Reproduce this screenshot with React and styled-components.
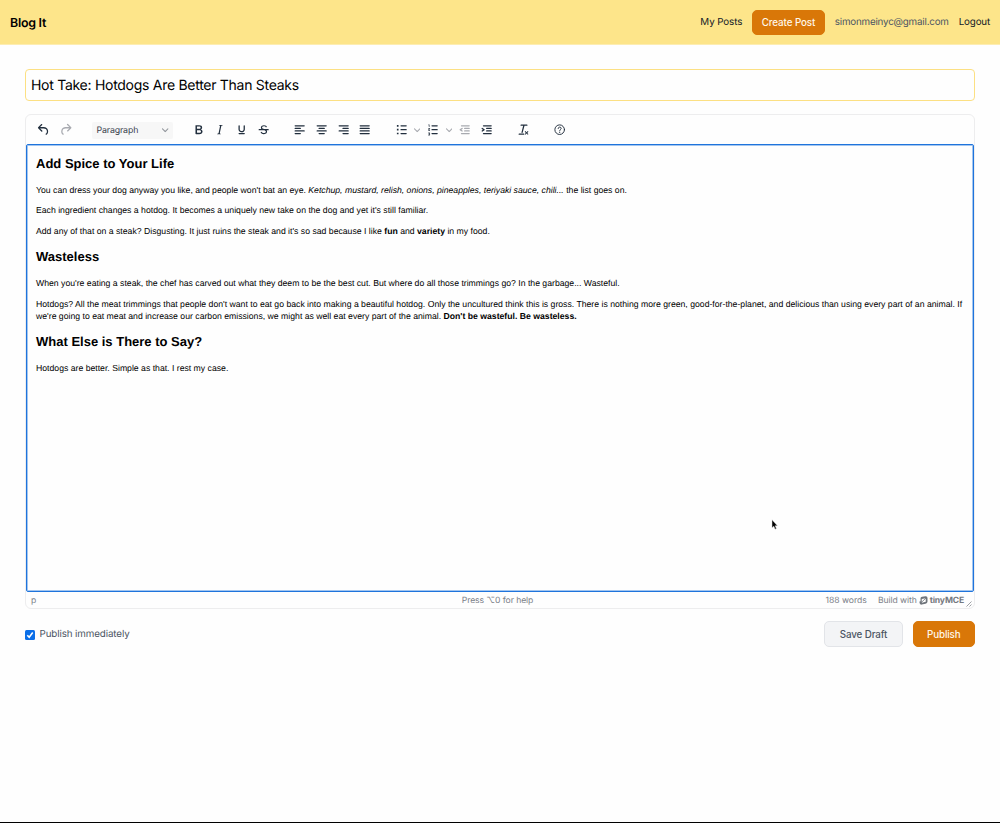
import React from 'react';
import styled, { createGlobalStyle } from 'styled-components';

const Global = createGlobalStyle`
  *, *::before, *::after { box-sizing: border-box; }
  html, body { margin: 0; padding: 0; background: #fff; }
  body {
    font-family: Inter, "Liberation Sans", sans-serif;
    color: #000;
    overflow: hidden;
    text-rendering: geometricPrecision;
  }
`;

const Page = styled.div`
  display: flex;
  flex-direction: column;
  height: 823px;
  border-bottom: 1px solid #000;
  background: #fefefe;
`;

const Header = styled.header`
  display: flex;
  align-items: center;
  justify-content: space-between;
  height: 45px;
  padding: 1px 10px 0;
  background: #fde58a;
  border-bottom: 1px solid #fdedb2;
`;

const Brand = styled.span`
  padding-bottom: 1px;
  font-size: 12.4px;
  font-weight: 600;
  letter-spacing: -0.25px;
  white-space: nowrap;
`;

const Nav = styled.nav`
  display: flex;
  align-items: center;
  gap: 10px;
`;

const NavLink = styled.span`
  padding-top: 1px;
  font-size: 9.8px;
  line-height: 16px;
  white-space: nowrap;
  letter-spacing: ${(p) => p.$ls || '0'};
  color: ${(p) => (p.$muted ? '#4b5563' : '#111827')};
`;

const Button = styled.button`
  display: flex;
  align-items: center;
  justify-content: center;
  flex: none;
  width: ${(p) => p.$w}px;
  height: ${(p) => p.$h || 26}px;
  padding: 0;
  border: 1px solid ${(p) => (p.$plain ? '#e2e4e8' : '#d97708')};
  border-radius: 5px;
  background: ${(p) => (p.$plain ? '#f3f4f6' : '#d97708')};
  color: ${(p) => (p.$plain ? '#4b5563' : '#fff8ea')};
  font-family: inherit;
  font-size: 9.8px;
  font-weight: 500;
  letter-spacing: ${(p) => p.$ls || '0'};
  white-space: nowrap;
`;

const Main = styled.main`
  display: flex;
  flex-direction: column;
  padding: 24px 25px 0;
`;

const TitleField = styled.div`
  display: flex;
  align-items: center;
  height: 32px;
  padding: 1px 5px 0;
  border: 1px solid #fce083;
  border-radius: 4px;
  font-size: 14px;
  letter-spacing: -0.28px;
  white-space: nowrap;
`;

const Editor = styled.section`
  display: flex;
  flex-direction: column;
  height: 495px;
  margin-top: 13px;
  border: 1px solid #ededee;
  border-radius: 6px;
`;

const Toolbar = styled.div`
  display: flex;
  align-items: center;
  height: 29px;
  padding: 1px 0 0 7px;
`;

const Group = styled.div`
  display: flex;
  align-items: center;
  margin-left: ${(p) => p.$gap || 0}px;
`;

const Tool = styled.span`
  display: flex;
  align-items: center;
  justify-content: center;
  width: ${(p) => p.$w || 21.76}px;
  height: 22px;
  color: ${(p) => (p.$off ? '#a8aab0' : '#222f3e')};
  svg { display: block; fill: currentColor; }
`;

const BlockSelect = styled.div`
  display: flex;
  align-items: center;
  justify-content: space-between;
  width: 81px;
  height: 17px;
  margin-left: 15px;
  padding: 1px 4px 0 5px;
  border-radius: 2px;
  background: #f7f7f7;
  color: #39424e;
  font-size: 8.8px;
  letter-spacing: -0.15px;
  svg { fill: #92969c; }
`;

const Content = styled.article`
  flex: 1;
  padding: 11px 9px 0 9px;
  border: 1px solid #1f74dc;
  border-radius: 2px;
  box-shadow: inset 0 0 0 1px #a3c6f0;
  background: #fefefe;
  font-family: "Liberation Sans", Arial, sans-serif;
  color: #000;
`;

const Heading = styled.h2`
  margin: 0 0 12.5px;
  font-size: 13px;
  line-height: 15px;
  font-weight: 700;
  white-space: nowrap;
`;

const SectionHeading = styled(Heading)`
  margin: -0.8px 0 13.1px;
`;

const Para = styled.p`
  margin: 0 0 ${(p) => p.$gap || 8.7}px;
  font-size: 8.69px;
  line-height: 12.16px;
  white-space: nowrap;
`;

const StatusBar = styled.footer`
  display: grid;
  grid-template-columns: 1fr auto 1fr;
  align-items: center;
  height: 16px;
  padding: 0 2px 0 5px;
  color: #7b8088;
  font-size: 8.6px;
  line-height: 12px;
  white-space: nowrap;
`;

const StatusText = styled.span`
  padding-top: 2px;
  letter-spacing: ${(p) => p.$ls || '0'};
`;

const HelpHint = styled(StatusText)`
  margin-right: 8px;
`;

const StatusEnd = styled.div`
  display: flex;
  align-items: center;
  justify-content: flex-end;
`;

const Branding = styled.span`
  display: flex;
  align-items: center;
  gap: 2px;
  margin-left: 11px;
`;

const Wordmark = styled.b`
  padding-top: 1px;
  font-size: 8.6px;
  font-weight: 700;
  letter-spacing: -0.16px;
  color: #757980;
`;

const Grip = styled.svg`
  align-self: flex-end;
  margin: 5px 0 0 2px;
`;

const Actions = styled.div`
  display: flex;
  align-items: center;
  justify-content: space-between;
  margin-top: 12px;
`;

const CheckLabel = styled.label`
  display: flex;
  align-items: center;
  gap: 4.5px;
  padding-top: 1px;
  font-size: 9.8px;
  color: #4b5563;
  letter-spacing: -0.12px;
  white-space: nowrap;
`;

const ButtonRow = styled.div`
  display: flex;
  gap: 9.5px;
`;

const Cursor = styled.svg`
  position: absolute;
  left: 771px;
  top: 519px;
`;

const bar = (x, y, w) => `M${x + 1} ${y}h${w - 2}a1 1 0 0 1 0 2h-${w - 2}a1 1 0 0 1 0-2Z`;
const PATHS = {
  undo: 'M6.4 8H12c3.7 0 6.2 2 6.8 5.1.6 2.7-.4 5.6-2.3 6.8a1 1 0 0 1-1-1.8c1.1-.6 1.8-2.7 1.4-4.6-.5-2.1-2.1-3.5-4.9-3.5H6.4l3.3 3.3a1 1 0 1 1-1.4 1.4l-5-5a1 1 0 0 1 0-1.4l5-5a1 1 0 0 1 1.4 1.4L6.4 8Z',
  redo: 'M17.6 10H12c-2.8 0-4.4 1.4-4.9 3.5-.4 2 .3 4 1.4 4.6a1 1 0 1 1-1 1.8c-2-1.2-2.9-4.1-2.3-6.8.6-3 3-5.1 6.8-5.1h5.6l-3.3-3.3a1 1 0 1 1 1.4-1.4l5 5a1 1 0 0 1 0 1.4l-5 5a1 1 0 0 1-1.4-1.4l3.3-3.3Z',
  bold: 'M7.8 19c-.3 0-.5 0-.6-.2l-.2-.5V5.7c0-.2 0-.4.2-.5l.6-.2h5c1.5 0 2.7.3 3.5 1 .7.6 1.1 1.4 1.1 2.5a3 3 0 0 1-.6 1.9c-.4.6-1 1-1.6 1.2.4.1.9.3 1.3.6s.8.7 1 1.2c.4.4.5 1 .5 1.6 0 1.3-.4 2.3-1.3 3-.8.7-2.1 1-3.8 1H7.8Zm5-8.3c.6 0 1.2-.1 1.6-.5.4-.3.6-.7.6-1.3 0-1.1-.8-1.7-2.3-1.7H9.3v3.5h3.4Zm.5 6c.7 0 1.3-.1 1.7-.4.4-.4.6-.9.6-1.5s-.2-1-.7-1.4c-.4-.3-1-.4-2-.4H9.4v3.8h4Z',
  italic: 'm16.7 4.7-.1.9h-.3c-.6 0-1 0-1.4.3-.3.3-.4.6-.5 1.1l-2.1 9.8v.6c0 .5.4.8 1.4.8h.2l-.2.8H8l.2-.8h.2c1.1 0 1.8-.5 2-1.5l2-9.8.1-.5c0-.6-.4-.8-1.4-.8h-.3l.2-.9h5.8Z',
  underline: 'M16 5c.6 0 1 .4 1 1v5.5a4 4 0 0 1-.4 1.8l-1 1.4a5.3 5.3 0 0 1-5.5 1 5 5 0 0 1-1.6-1c-.5-.4-.8-.9-1.1-1.4a4 4 0 0 1-.4-1.8V6c0-.6.4-1 1-1s1 .4 1 1v5.5c0 .3 0 .6.2 1l.6.7a3.3 3.3 0 0 0 2.2.8 3.4 3.4 0 0 0 2.2-.8c.3-.2.4-.5.6-.8l.2-.9V6c0-.6.4-1 1-1ZM8 17h8c.6 0 1 .4 1 1s-.4 1-1 1H8a1 1 0 0 1 0-2Z',
  strike: 'M15.6 8.5c-.5-.7-1-1.1-1.3-1.3-.6-.4-1.3-.6-2-.6-2.7 0-2.8 1.7-2.8 2.1 0 1.6 1.8 2 3.2 2.3 4.4.9 4.6 2.8 4.6 3.9 0 1.4-.7 4.1-5 4.1A6.2 6.2 0 0 1 7 16.4l1.5-1.1c.4.6 1.6 2 3.7 2 1.6 0 2.5-.4 3-1.2.4-.8.3-2-.8-2.6-.7-.4-1.6-.7-2.9-1-1-.2-3.9-.8-3.9-3.6C7.6 6 10.3 5 12.4 5c2.9 0 4.2 1.6 4.7 2.4l-1.5 1.1Z M5 11h14a1 1 0 0 1 0 2H5a1 1 0 0 1 0-2Z',
  left: bar(4, 5, 16) + bar(4, 9, 10) + bar(4, 13, 16) + bar(4, 17, 10),
  center: bar(4, 5, 16) + bar(7, 9, 10) + bar(4, 13, 16) + bar(7, 17, 10),
  right: bar(4, 5, 16) + bar(10, 9, 10) + bar(4, 13, 16) + bar(10, 17, 10),
  justify: bar(4, 5, 16) + bar(4, 9, 16) + bar(4, 13, 16) + bar(4, 17, 16),
  bullets: bar(10, 5, 10) + bar(10, 11, 10) + bar(10, 17, 10) + 'M4.5 4.8h2.6v2.6H4.5ZM4.5 10.7h2.6v2.6H4.5ZM4.5 16.7h2.6v2.6H4.5Z',
  numbers: bar(10, 5, 10) + bar(10, 11, 10) + bar(10, 17, 10) + 'M7 4v3.5c0 .3-.2.5-.5.5a.5.5 0 0 1-.5-.5V5h-.5a.5.5 0 0 1 0-1H7ZM6 12.2l.2.3h1.3c.3 0 .5.2.5.5s-.2.5-.5.5H5.6a.6.6 0 0 1-.6-.6v-.6c0-.4.2-.7.6-.8l1.4-.6.1-.2-.2-.2H5.5a.5.5 0 0 1 0-1h1.6c.5 0 .9.4.9.9v.5c0 .4-.2.7-.6.8ZM7 21H5.5a.5.5 0 0 1 0-1h1.3v-.7H5.5a.5.5 0 0 1 0-1h1.3v-.7H5.5a.5.5 0 0 1 0-1H7c.5 0 .9.4.9.9v2.6c0 .5-.4.9-.9.9Z',
  outdent: bar(6, 5, 14) + bar(11, 9, 9) + bar(11, 13, 9) + bar(6, 17, 14) + 'M8.6 13.2a1 1 0 1 1-1.2 1.6l-3-2a1 1 0 0 1 0-1.6l3-2a1 1 0 0 1 1.2 1.6L6.8 12l1.8 1.2Z',
  indent: bar(6, 5, 14) + bar(11, 9, 9) + bar(11, 13, 9) + bar(6, 17, 14) + 'M4.4 13.2 6.2 12l-1.8-1.2a1 1 0 0 1 1.2-1.6l3 2a1 1 0 0 1 0 1.6l-3 2a1 1 0 1 1-1.2-1.6Z',
  clear: 'M13.2 6a1 1 0 0 1 0 .2l-2.6 10a1 1 0 0 1-1 .8h-.2a.8.8 0 0 1-.8-1l2.6-10H8a1 1 0 1 1 0-2h9a1 1 0 0 1 0 2h-3.8ZM5 18h7a1 1 0 0 1 0 2H5a1 1 0 0 1 0-2Zm13 1.5L16.5 18 15 19.5a.7.7 0 0 1-1-1l1.5-1.5-1.5-1.5a.7.7 0 0 1 1-1l1.5 1.5 1.5-1.5a.7.7 0 0 1 1 1L17.5 17l1.5 1.5a.7.7 0 0 1-1 1Z',
};

const Icon = ({ name, off }) => (
  <Tool $off={off}>
    <svg width="15.36" height="15.36" viewBox="0 0 24 24">
      {name === 'help' ? (
        <g fill="none" stroke="currentColor" strokeLinecap="round">
          <circle cx="12" cy="12" r="7.5" strokeWidth="1.5" />
          <path d="M9.7 10.2c.1-1.5 1.1-2.2 2.4-2.2s2.3.8 2.3 1.9c0 1.6-2.3 1.7-2.3 3.5" strokeWidth="1.5" />
          <path d="M12.05 15.9v.2" strokeWidth="1.8" />
        </g>
      ) : (
        <path d={PATHS[name]} />
      )}
    </svg>
  </Tool>
);

const ChevronGlyph = () => (
  <svg width="6.4" height="6.4" viewBox="0 0 10 10">
    <path d="M8.7 2.2c.3-.3.8-.3 1 0 .4.4.4.9 0 1.2L5.7 7.8c-.3.3-.9.3-1.2 0L.2 3.4a.8.8 0 0 1 0-1.2c.3-.3.8-.3 1.1 0L5 6l3.7-3.8Z" />
  </svg>
);

const Chevron = () => (
  <Tool $off $w={10}>
    <ChevronGlyph />
  </Tool>
);

export default function App() {
  return (
    <>
      <Global />
      <Page>
        <Header>
          <Brand>Blog It</Brand>
          <Nav>
            <NavLink $ls="-0.1px">My Posts</NavLink>
            <Button $w={72.5} $h={25} $ls="-0.08px">Create Post</Button>
            <NavLink $muted $ls="-0.2px">simonmeinyc@gmail.com</NavLink>
            <NavLink $ls="-0.17px">Logout</NavLink>
          </Nav>
        </Header>
        <Main>
          <TitleField>Hot Take: Hotdogs Are Better Than Steaks</TitleField>
          <Editor>
            <Toolbar>
              <Group><Icon name="undo" /><Icon name="redo" off /></Group>
              <BlockSelect>Paragraph<ChevronGlyph /></BlockSelect>
              <Group $gap={15}>
                <Icon name="bold" /><Icon name="italic" /><Icon name="underline" /><Icon name="strike" />
              </Group>
              <Group $gap={14.5}>
                <Icon name="left" /><Icon name="center" /><Icon name="right" /><Icon name="justify" />
              </Group>
              <Group $gap={14.5}>
                <Icon name="bullets" /><Chevron /><Icon name="numbers" /><Chevron />
                <Icon name="outdent" off /><Icon name="indent" />
              </Group>
              <Group $gap={15}><Icon name="clear" /></Group>
              <Group $gap={15}><Icon name="help" /></Group>
            </Toolbar>
            <Content>
              <Heading>Add Spice to Your Life</Heading>
              <Para>You can dress your dog anyway you like, and people won't bat an eye. <i>Ketchup, mustard, relish, onions, pineapples, teriyaki sauce, chili...</i> the list goes on.</Para>
              <Para>Each ingredient changes a hotdog. It becomes a uniquely new take on the dog and yet it's still familiar.</Para>
              <Para $gap={12.5}>Add any of that on a steak? Disgusting. It just ruins the steak and it's so sad because I like <b>fun</b> and <b>variety</b> in my food.</Para>
              <SectionHeading>Wasteless</SectionHeading>
              <Para>When you're eating a steak, the chef has carved out what they deem to be the best cut. But where do all those trimmings go? In the garbage... Wasteful.</Para>
              <Para $gap={12.2}>Hotdogs? All the meat trimmings that people don't want to eat go back into making a beautiful hotdog. Only the uncultured think this is gross. There is nothing more green, good-for-the-planet, and delicious than using every part of an animal. If<br />we're going to eat meat and increase our carbon emissions, we might as well eat every part of the animal. <b>Don't be wasteful. Be wasteless.</b></Para>
              <SectionHeading>What Else is There to Say?</SectionHeading>
              <Para>Hotdogs are better. Simple as that. I rest my case.</Para>
            </Content>
            <StatusBar>
              <StatusText>p</StatusText>
              <HelpHint $ls="-0.08px">Press ⌥0 for help</HelpHint>
              <StatusEnd>
                <StatusText>188 words</StatusText>
                <Branding>
                  <StatusText $ls="-0.08px">Build with</StatusText>
                  <svg width="9" height="9" viewBox="0 0 18 18">
                    <path
                      fill="#6f747b"
                      fillRule="evenodd"
                      d="M6 1.5 13 .6q4-.4 4 3.600v6.600q0 4-4 4.700l-7.500 1.700Q1 17.800 1 13.200V11l2-.5V5q0-3 3-3.500ZM5.500 6v7.500l8-1.800V4.300Z"
                    />
                    <path fill="none" stroke="#6f747b" strokeWidth="1.6" d="M4 13.500 14 4" />
                  </svg>
                  <Wordmark>tinyMCE</Wordmark>
                </Branding>
                <Grip width="6" height="6" viewBox="0 0 6 6" stroke="#85898f" strokeWidth=".8">
                  <path d="M.5 5.5 5.5.5M3.5 5.5l2-2" />
                </Grip>
              </StatusEnd>
            </StatusBar>
          </Editor>
          <Actions>
            <CheckLabel>
              <svg width="10" height="10" viewBox="0 0 10 10">
                <rect width="10" height="10" rx="1.5" fill="#0b6fe8" />
                <path d="m2.3 5.2 1.9 2.1 3.5-4.8" fill="none" stroke="#fff" strokeWidth="1.5" />
              </svg>
              Publish immediately
            </CheckLabel>
            <ButtonRow>
              <Button $w={79} $plain $ls="-0.1px">Save Draft</Button>
              <Button $w={62.5} $ls="-0.15px">Publish</Button>
            </ButtonRow>
          </Actions>
        </Main>
        <Cursor width="7" height="12" viewBox="0 0 7 12">
          <path d="M1 .8v8l1.8-1.6 1.3 3 1.3-.6-1.3-2.8h2.3Z" fill="#000" stroke="#ddd" strokeWidth=".5" />
        </Cursor>
      </Page>
    </>
  );
}
